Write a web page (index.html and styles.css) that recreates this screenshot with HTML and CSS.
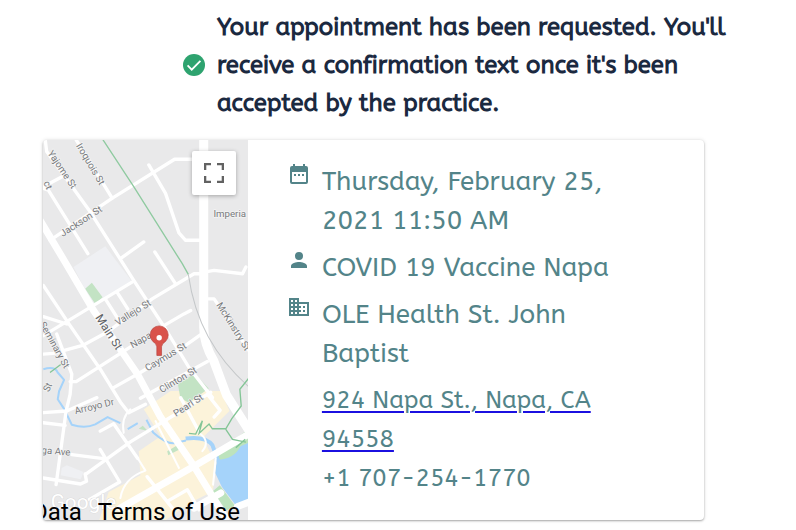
FILE: index.html
```html
<!DOCTYPE html>
<html lang="en">
<head>
    <meta charset="UTF-8">
    <meta name="viewport" content="width=device-width, initial-scale=1.0">
    <title>Appointment requested</title>
    <link rel="stylesheet" href="styles.css">
</head>
<body>
    <header class="notice">
        <svg class="notice-icon" viewBox="0 0 24 24" aria-hidden="true">
            <circle cx="12" cy="12" r="12" fill="#2ea36f"/>
            <path d="M5 12.500l4.500 4.500L19 7.500" fill="none" stroke="#fff" stroke-width="2"/>
        </svg>
        <h1 class="notice-text">Your appointment has been requested. You'll receive a confirmation text once it's been accepted by the practice.</h1>
    </header>

    <main class="card">
        <section class="map" aria-label="Map">
            <svg class="map-canvas" viewBox="9 15 612 1146" preserveAspectRatio="xMidYMid slice" aria-hidden="true">
                <rect x="0" y="0" width="640" height="1180" fill="#e9e9ea"/>
                <!-- blocks, parks and water -->
                <path d="M100 400l95-62 80 105-115 75zM65 1000l15-8 50 20-8 22-60-12z" fill="#eff0f3"/>
                <path d="M310 825l80-55h150l26 60-80 80 40 80-10 80-60 30-90 62H175l30-90 95-50-5-72 65-45z" fill="#fcf3da"/>
                <path d="M135 465l20-18 32 43-22 20zM412 750l50-32 42 45-60 42-25-15zM380 950l30-18 5 14-32 16zM295 883l12-9 15 16z" fill="#c3e3c4"/>
                <path d="M528 960l60-50 34-25v60l-50 30-34 10zM515 1070l22-18 45 60-25 15z" fill="#bde3bd"/>
                <path d="M529 975q50 0 70-40l24-10v185l-35 6-45-60-20-42z" fill="#a5d3fa"/>
                <g class="creek">
                    <path d="M10 705q35-10 43 10l19 22-15 34-4 24 20 30 22 46q40 12 70-1l37-22 38 18M262 884l30-18M318 856l20 38q38 34 62 32l36-8" stroke-width="6"/>
                    <path d="M435 912q60-8 80 20l18 50" stroke-width="12"/>
                </g>
                <!-- streets -->
                <g class="road">
                    <path d="M30 320l185-125L402 78h60M15 15l5 40 130 180 130 205 95 145 70 115 70 90M10 165l15 5 118 190M10 160l60-32M108 20l108 175M325 95l50 85 40 118 20 22h50M240 375l70-50M343 355l62 95"/>
                    <path d="M10 605l265-160M10 660l30-2 90-25 70-38 135-100 125-75h30M90 742h18l152-97 110-70 60-35 20-10M220 760l80-45 140-85 40-28M300 792l200-110M10 455l80 120 90 130 60 98 25 32 50-25M10 548l70 22M195 495l38 60M230 475l32 50"/>
                    <path d="M490 415l30-5 85 10 10-20M500 495h20l105 155M50 600l45 120-5 60-12 50-30 220M10 865l65 8M10 835l70-5 90-40"/>
                    <path d="M135 1020l135-98 160-98 80-50M95 960l95 12M180 945l58 97-90 52M135 1018l4 22-18 8-111-18M180 890l40-22 72 104M320 1026l80 100M380 1100l60-35 35 60M420 790l55 102M500 780l38 48-18 20"/>
                </g>
                <g class="road road-narrow">
                    <path d="M250 895q-8-45 20-70M240 1090q10-60 75-82l-25-40M345 860l70 140M525 970l-8 80M475 895q35 25 10 55"/>
                </g>
                <g class="road road-wide">
                    <path d="M0 260l78 130 82 140 130 188 70 130 100 147 95 155M240 1120l220-125 165-97M460 1120l80-45M590 1115l40-15"/>
                    <path d="M489 0v580q0 50 30 100l38 102 75 118" class="highway"/>
                </g>
                <path d="M185 15l95 145 145 230 18 32" fill="none" stroke="#8fcaa0" stroke-width="4"/>
                <path d="M443 422q15 105 60 187t122 150" fill="none" stroke="#c4c7c9" stroke-width="3"/>
                <path d="M30 715l32-24M625 730l-28 35 4 50-28 38-18 30-40 0-10-14-30 28 10-38-20 40-20-2M555 885l20 30 40 8M585 940l28-26" fill="none" stroke="#83c596" stroke-width="4"/>
                <!-- street names -->
                <g class="street">
                    <text transform="translate(22 60) rotate(56)">Yajome St</text>
                    <text transform="translate(107 38) rotate(59)">Iroquois St</text>
                    <text transform="translate(68 310) rotate(-33)">Jackson St</text>
                    <text transform="translate(10 148) rotate(65)">ct</text>
                    <text x="518" y="252">Imperia</text>
                    <text transform="translate(232 576) rotate(-32)">Vallejo St</text>
                    <text transform="translate(164 551) rotate(57)" class="street-main">Main St</text>
                    <text transform="translate(276 643) rotate(-29)">Napa St</text>
                    <text transform="translate(321 712) rotate(-31)">Caymus St</text>
                    <text transform="translate(364 777) rotate(-31)">Clinton St</text>
                    <text transform="translate(526 513) rotate(58)">McKinstry St</text>
                    <text transform="translate(-2 570) rotate(61)">Seminary St</text>
                    <text transform="translate(26 775) rotate(-65)">St</text>
                    <text transform="translate(106 840) rotate(-14)">Arroyo Dr</text>
                    <text transform="translate(406 848) rotate(-33)">Pearl St</text>
                    <text transform="translate(4 956) rotate(5)">ga Ave</text>
                </g>
                <text x="32" y="1122" class="watermark">Google</text>
                <!-- pin -->
                <path d="M349 638q-3-12-12-16a27 27 0 1 1 38 0q-9 4-12 16v26h-14z" fill="#d9534b" stroke="#b8433d" stroke-width="2"/>
                <circle cx="356" cy="611" r="8" fill="#fff"/>
            </svg>
            <button class="map-fullscreen" type="button" aria-label="Toggle fullscreen view">
                <svg viewBox="0 0 20 20" aria-hidden="true">
                    <path d="M1 7V1h6M13 1h6v6M19 13v6h-6M7 19H1v-6" fill="none" stroke="#626262" stroke-width="2.6"/>
                </svg>
            </button>
            <div class="map-legal">
                <span>Map Data</span>
                <a href="#terms">Terms of Use</a>
            </div>
        </section>

        <section class="details">
            <div class="detail">
                <svg class="detail-icon" viewBox="0 0 24 24" aria-hidden="true">
                    <path d="M7 12h2v2H7zm4 0h2v2h-2zm4 0h2v2h-2zM19 4h-1V2h-2v2H8V2H6v2H5a2 2 0 0 0-2 2v14a2 2 0 0 0 2 2h14a2 2 0 0 0 2-2V6a2 2 0 0 0-2-2zm0 16H5V10h14z"/>
                </svg>
                <p>Thursday, February 25, 2021 11:50 AM</p>
            </div>
            <div class="detail">
                <svg class="detail-icon" viewBox="0 0 24 24" aria-hidden="true">
                    <path d="M12 12a4 4 0 1 0 0-8 4 4 0 0 0 0 8zm0 2c-2.700 0-8 1.300-8 4v2h16v-2c0-2.700-5.300-4-8-4z"/>
                </svg>
                <p>COVID 19 Vaccine Napa</p>
            </div>
            <div class="detail">
                <svg class="detail-icon" viewBox="0 0 24 24" aria-hidden="true">
                    <path d="M12 7V3H2v18h20V7zM6 19H4v-2h2zm0-4H4v-2h2zm0-4H4V9h2zm0-4H4V5h2zm4 12H8v-2h2zm0-4H8v-2h2zm0-4H8V9h2zm0-4H8V5h2zm10 12h-8v-2h2v-2h-2v-2h2v-2h-2V9h8zm-2-8h-2v2h2zm0 4h-2v2h2z"/>
                </svg>
                <p>OLE Health St. John Baptist</p>
            </div>
            <address class="contact">
                <a class="contact-address" href="#directions">924 Napa St., Napa, CA 94558</a>
                <span>+1 707-254-1770</span>
            </address>
        </section>
    </main>
</body>
</html>
```

FILE: styles.css
```css
* { margin: 0; padding: 0; box-sizing: border-box; }
body {
    background: #fff;
    font-family: ABeeZee, "Noto Sans", sans-serif;
    color: #1b2940;
}
.notice {
    display: flex;
    align-items: center;
    gap: 12px;
    padding: 8px 48px 0 183px;
}
.notice-icon {
    flex: none;
    width: 22px;
    height: 22px;
}
.notice-text {
    font-size: 24px;
    line-height: 38px;
    font-weight: 700;
}
.card {
    display: flex;
    margin: 18px 92px 8px 43px;
    border-radius: 4px;
    background: #fff;
    box-shadow: 0 1px 2px rgba(0, 0, 0, 0.3), 0 0 4px rgba(0, 0, 0, 0.12);
    overflow: hidden;
}
.map {
    position: relative;
    flex: 0 0 31%;
    overflow: hidden;
    font-family: Roboto, sans-serif;
}
.map-canvas {
    position: absolute;
    inset: 0;
    width: 100%;
    height: 100%;
}
.road path {
    fill: none;
    stroke: #fff;
    stroke-width: 10;
    stroke-linejoin: round;
    stroke-linecap: round;
}
.road-narrow path {
    stroke-width: 6;
}
.road-wide path {
    stroke-width: 21;
}
.road-wide .highway {
    stroke-width: 27;
}
.creek path {
    fill: none;
    stroke: #a5d3fa;
    stroke-linejoin: round;
}
.street text {
    font-size: 29px;
    fill: #77797c;
    stroke: #f5f5f5;
    stroke-width: 4px;
    paint-order: stroke;
}
.street .street-main {
    font-size: 35px;
    fill: #5f6265;
}
.watermark {
    font-size: 62px;
    fill: #fff;
    stroke: #d4d4d4;
    stroke-width: 2px;
    paint-order: stroke;
}
.map-fullscreen {
    position: absolute;
    top: 11px;
    right: 12px;
    display: flex;
    align-items: center;
    justify-content: center;
    width: 44px;
    height: 44px;
    border: none;
    border-radius: 2px;
    background: #fff;
    box-shadow: 0 1px 4px rgba(0, 0, 0, 0.3);
    cursor: pointer;
}
.map-fullscreen svg {
    width: 20px;
    height: 20px;
}
.map-legal {
    position: absolute;
    right: 8px;
    bottom: -6px;
    display: flex;
    gap: 16px;
    font-size: 24px;
    line-height: 28px;
    white-space: nowrap;
    color: #000;
}
.map-legal a {
    color: #000;
    text-decoration: none;
}
.details {
    display: flex;
    flex-direction: column;
    gap: 8px;
    flex: 1;
    padding: 22px 80px 22px 39px;
    color: #538489;
    font-size: 26px;
    line-height: 39px;
}
.detail {
    display: flex;
    align-items: flex-start;
    gap: 11px;
}
.detail-icon {
    flex: none;
    width: 24px;
    height: 24px;
    fill: #538489;
}
.contact {
    display: flex;
    flex-direction: column;
    align-items: flex-start;
    padding-left: 35px;
    font-size: 24px;
    font-style: normal;
}
.contact-address {
    color: #538489;
    text-decoration: underline #1b10e0 2px;
    text-underline-offset: 3px;
}
```
